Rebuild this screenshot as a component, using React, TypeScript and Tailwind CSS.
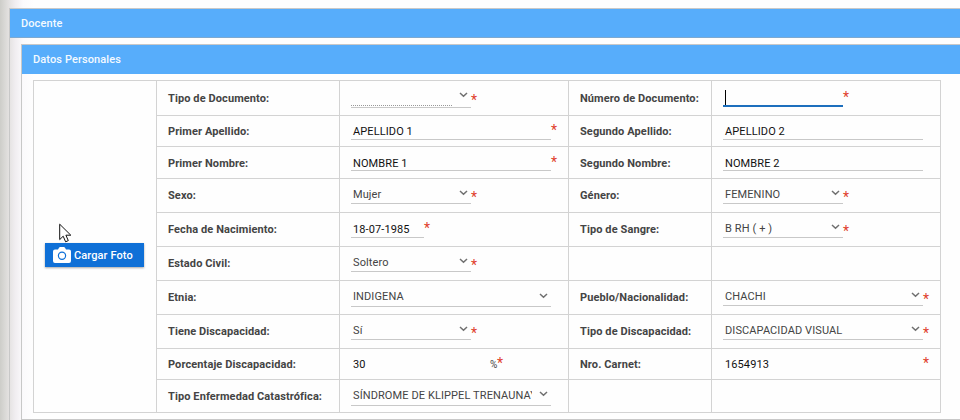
import React from "react";

type Field = {
  value?: string;
  select?: boolean;
  dark?: boolean;
  box: string;
  text: string;
  chevron?: string;
  star?: string;
  dotted?: boolean;
  focused?: boolean;
  suffix?: string;
};

type Row = { height: string; labelPad?: string; label: string; field: Field; label2?: string; field2?: Field };

const line = "border-b border-[#c8c8c8]";

const rows: Row[] = [
  {
    height: "h-[35px]",
    label: "Tipo de Documento:",
    field: { select: true, dotted: true, box: `w-[120px] h-[27px] ${line}`, text: "pt-2", chevron: "mt-[11px]", star: "mt-3" },
    label2: "Número de Documento:",
    field2: { focused: true, box: "w-[120px] h-[26px] border-b-2 border-[#1d6fbd]", text: "pt-[9px]", star: "mt-[9px]" },
  },
  {
    height: "h-[31px]",
    label: "Primer Apellido:",
    field: { value: "APELLIDO 1", dark: true, box: `w-[200px] h-6 ${line}`, text: "pt-[9px]", star: "mt-[7px]" },
    label2: "Segundo Apellido:",
    field2: { value: "APELLIDO 2", dark: true, box: `w-[200px] h-6 ${line}`, text: "pt-[9px]" },
  },
  {
    height: "h-[32px]",
    labelPad: "pt-[3px]",
    label: "Primer Nombre:",
    field: { value: "NOMBRE 1", dark: true, box: `w-[200px] h-6 ${line}`, text: "pt-[10px]", star: "mt-2" },
    label2: "Segundo Nombre:",
    field2: { value: "NOMBRE 2", dark: true, box: `w-[200px] h-6 ${line}`, text: "pt-[10px]" },
  },
  {
    height: "h-[34px]",
    label: "Sexo:",
    field: { value: "Mujer", select: true, box: `w-[120px] h-[25px] ${line}`, text: "pt-[9px]", chevron: "mt-[11px]", star: "mt-[11px]" },
    label2: "Género:",
    field2: { value: "FEMENINO", select: true, box: `w-[120px] h-[25px] ${line}`, text: "pt-[9px]", chevron: "mt-[11px]", star: "mt-[11px]" },
  },
  {
    height: "h-[34px]",
    label: "Fecha de Nacimiento:",
    field: { value: "18-07-1985", dark: true, box: `w-[73px] h-[25px] ${line}`, text: "pt-[10px]", star: "mt-2" },
    label2: "Tipo de Sangre:",
    field2: { value: "B RH ( + )", select: true, box: `w-[120px] h-[25px] ${line}`, text: "pt-[9px]", chevron: "mt-[11px]", star: "mt-[11px]" },
  },
  {
    height: "h-[34px]",
    label: "Estado Civil:",
    field: { value: "Soltero", select: true, box: `w-[120px] h-[25px] ${line}`, text: "pt-[9px]", chevron: "mt-[11px]", star: "mt-[11px]" },
  },
  {
    height: "h-[34px]",
    label: "Etnia:",
    field: { value: "INDIGENA", select: true, box: `w-[200px] h-[26px] ${line}`, text: "pt-[9px]", chevron: "mt-3" },
    label2: "Pueblo/Nacionalidad:",
    field2: { value: "CHACHI", select: true, box: `w-[200px] h-[25px] ${line}`, text: "pt-[9px]", chevron: "mt-[11px]", star: "mt-[11px]" },
  },
  {
    height: "h-[34px]",
    label: "Tiene Discapacidad:",
    field: { value: "Sí", select: true, box: `w-[120px] h-[25px] ${line}`, text: "pt-[9px]", chevron: "mt-[11px]", star: "mt-[11px]" },
    label2: "Tipo de Discapacidad:",
    field2: { value: "DISCAPACIDAD VISUAL", select: true, box: `w-[200px] h-[25px] ${line}`, text: "pt-[9px]", chevron: "mt-[11px]", star: "mt-[11px]" },
  },
  {
    height: "h-[31px]",
    label: "Porcentaje Discapacidad:",
    field: { value: "30", dark: true, box: "w-[138px] h-6", text: "pt-[9px]", suffix: "%", star: "mt-[7px]" },
    label2: "Nro. Carnet:",
    field2: { value: "1654913", dark: true, box: "w-[200px] h-6", text: "pt-[9px]", star: "mt-[7px]" },
  },
  {
    height: "h-[33px]",
    label: "Tipo Enfermedad Catastrófica:",
    field: { value: "SÍNDROME DE KLIPPEL TRENAUNAY", select: true, box: `w-[200px] h-[26px] ${line}`, text: "pt-[9px]", chevron: "mt-[11px]" },
  },
];

function FieldView({ f }: { f: Field }) {
  return (
    <div className="flex items-start pl-[11px]">
      <div className={`flex shrink-0 items-start ${f.box}`}>
        <div
          className={`h-full min-w-0 flex-1 overflow-hidden whitespace-nowrap pl-[2px] ${f.text} ${f.dark ? "text-[#111]" : "text-[#444]"}`}
        >
          {f.dotted && <div className="-ml-[2px] h-[17px] w-[101px] border-b border-dotted border-[#999]" />}
          {f.focused && <div className="h-[15px] w-px bg-black" />}
          {f.value}
        </div>
        {f.select && (
          <svg className={`mr-[3px] ml-[7px] h-[6px] w-[9px] shrink-0 ${f.chevron}`} viewBox="0 0 9 6" fill="none">
            <path d="M1 1 L4.5 4.3 L8 1" stroke="#707070" strokeWidth="1.5" />
          </svg>
        )}
      </div>
      {f.suffix && <span className="mt-[9px] ml-px w-[7px] text-[10px] text-[#444]">{f.suffix}</span>}
      {f.star && <span className={`text-[14px] leading-[14px] text-[#e0402c] ${f.star}`}>*</span>}
    </div>
  );
}

function Label({ pad = "pt-px", children }: { pad?: string; children?: React.ReactNode }) {
  return <span className={`pl-[11px] font-bold tracking-[0.1px] whitespace-nowrap text-[#444] ${pad}`}>{children}</span>;
}

const cell = "shrink-0 border-r border-b border-[#d3d3d3]";

export default function App() {
  return (
    <div className="h-[420px] w-[960px] overflow-hidden bg-[linear-gradient(90deg,#cdcdc9_0px,#e4e2e1_9px,#f0edf0_15px,#fbfafc_23px,#fefefe_34px)] pt-2 pl-[9px] font-['Roboto',sans-serif] text-[11px] leading-[14px] tracking-[0.1px]">
      <div className="h-[440px] w-[970px] border-t border-l border-[#c8c8c8]">
        <div className="flex h-[29px] items-center border-b border-[#7da9d0] bg-[#57adfb] pt-px pl-[11px] font-medium text-[#f4faff]">
          Docente
        </div>
        <div className="mt-[6px] ml-[11px] h-[376px] border border-[#c8c8c8]">
          <div className="flex h-[29px] items-center bg-[#57adfb] pl-[11px] font-medium text-[#f4faff]">Datos Personales</div>
          <div className="mt-[6px] ml-[11px] flex w-[908px] border-t border-l border-[#d3d3d3] bg-[#fefefe]">
            <div className={`w-[123px] pt-[162px] pl-[11px] ${cell}`}>
              <button className="flex h-6 w-[99px] items-center bg-[#0f70d7] pl-2 text-[11px] font-medium tracking-[0.1px] text-white shadow-[0_1px_2px_rgba(0,0,0,0.35)]">
                <svg className="mr-[3px] h-4 w-[18px]" viewBox="0 0 18 16">
                  <path
                    d="M2 2.5h3L6 .8Q6.4 0 7.2 0h3.6q.8 0 1.2.8l1 1.7h3q2 0 2 2V14q0 2-2 2H2q-2 0-2-2V4.5q0-2 2-2Z"
                    fill="#fff"
                  />
                  <circle cx="9" cy="8.8" r="3.6" fill="none" stroke="#0f70d7" strokeWidth="1.2" />
                </svg>
                <span className="pt-[2px]">Cargar Foto</span>
              </button>
            </div>
            <div className="flex flex-col">
              {rows.map((r) => (
                <div key={r.label} className={`flex ${r.height}`}>
                  <div className={`flex w-[183px] items-center ${cell}`}>
                    <Label pad={r.labelPad}>{r.label}</Label>
                  </div>
                  <div className={`w-[229px] ${cell}`}>
                    <FieldView f={r.field} />
                  </div>
                  <div className={`flex w-[143px] items-center ${cell}`}>
                    <Label pad={r.labelPad}>{r.label2}</Label>
                  </div>
                  <div className={`w-[229px] ${cell}`}>{r.field2 && <FieldView f={r.field2} />}</div>
                </div>
              ))}
            </div>
          </div>
        </div>
      </div>
      <svg className="pointer-events-none absolute top-[223px] left-[59px] h-[20px] w-[13px]" viewBox="0 0 13 20">
        <path d="M.7 1.2V16.6L4.2 13.2L6.6 18.8L9.3 17.6L6.9 12.2H11.8Z" fill="#fff" stroke="#111" strokeWidth="1" />
      </svg>
    </div>
  );
}
